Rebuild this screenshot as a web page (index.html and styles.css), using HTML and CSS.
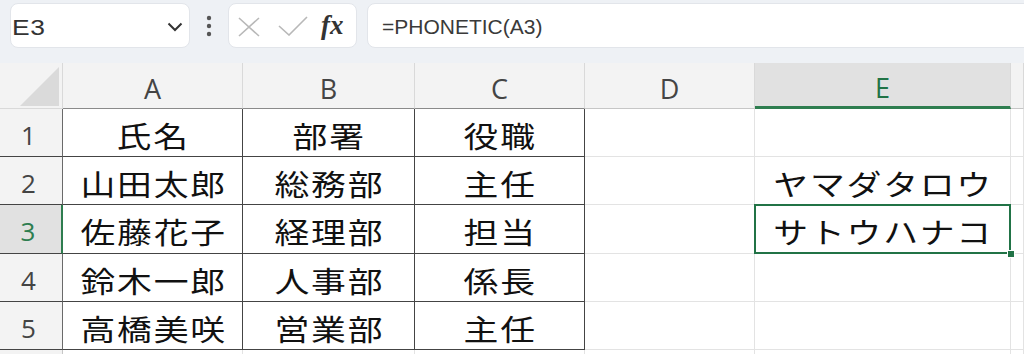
FILE: index.html
```html
<!DOCTYPE html>
<html lang="ja">
<head>
    <meta charset="UTF-8">
    <title>PHONETIC</title>
    <link rel="stylesheet" href="styles.css">
</head>
<body>
    <!-- formula bar -->
    <div class="toolbar">
        <div class="namebox">
            <span class="ref">E3</span>
            <svg class="chevron" width="16" height="10" viewBox="0 0 16 10"><polyline points="1.5,1.5 8,8 14.5,1.5" fill="none" stroke="#333" stroke-width="2"/></svg>
        </div>
        <div class="more">
            <svg width="6" height="22" viewBox="0 0 6 22"><circle cx="3" cy="3" r="2.2" fill="#555"/><circle cx="3" cy="11" r="2.2" fill="#555"/><circle cx="3" cy="19" r="2.2" fill="#555"/></svg>
        </div>
        <div class="fxbox">
            <svg class="cancel" width="22" height="20" viewBox="0 0 22 20"><path d="M1 1 L21 19 M21 1 L1 19" stroke="#b8b8b8" stroke-width="1.6" fill="none"/></svg>
            <svg class="enter" width="30" height="20" viewBox="0 0 30 20"><polyline points="1,10 11,19 29,1" stroke="#b8b8b8" stroke-width="1.6" fill="none"/></svg>
            <span class="fx">fx</span>
        </div>
        <div class="formula">=PHONETIC(A3)</div>
    </div>

    <!-- sheet -->
    <div class="sheet">
        <div class="cell corner"><svg width="63" height="46" viewBox="0 0 63 46"><polygon points="59,4 59,43 20,43" fill="#dadada"/></svg></div>
        <div class="cell ch tbl">A</div>
        <div class="cell ch tbl">B</div>
        <div class="cell ch tbl">C</div>
        <div class="cell ch">D</div>
        <div class="cell ch active">E</div>
        <div class="cell ch"></div>

        <div class="cell rh tbl">1</div>
        <div class="cell jp tbl"><span>氏名</span></div>
        <div class="cell jp tbl"><span>部署</span></div>
        <div class="cell jp tbl"><span>役職</span></div>
        <div class="cell"></div>
        <div class="cell"></div>
        <div class="cell"></div>

        <div class="cell rh tbl">2</div>
        <div class="cell jp tbl"><span>山田太郎</span></div>
        <div class="cell jp tbl"><span>総務部</span></div>
        <div class="cell jp tbl"><span>主任</span></div>
        <div class="cell"></div>
        <div class="cell jp"><span>ヤマダタロウ</span></div>
        <div class="cell"></div>

        <div class="cell rh tbl active">3</div>
        <div class="cell jp tbl"><span>佐藤花子</span></div>
        <div class="cell jp tbl"><span>経理部</span></div>
        <div class="cell jp tbl"><span>担当</span></div>
        <div class="cell"></div>
        <div class="cell jp selected"><span>サトウハナコ</span></div>
        <div class="cell"></div>

        <div class="cell rh tbl">4</div>
        <div class="cell jp tbl"><span>鈴木一郎</span></div>
        <div class="cell jp tbl"><span>人事部</span></div>
        <div class="cell jp tbl"><span>係長</span></div>
        <div class="cell"></div>
        <div class="cell"></div>
        <div class="cell"></div>

        <div class="cell rh tbl">5</div>
        <div class="cell jp tbl"><span>高橋美咲</span></div>
        <div class="cell jp tbl"><span>営業部</span></div>
        <div class="cell jp tbl"><span>主任</span></div>
        <div class="cell"></div>
        <div class="cell"></div>
        <div class="cell"></div>

        <div class="cell rh"></div>
        <div class="cell"></div>
        <div class="cell"></div>
        <div class="cell"></div>
        <div class="cell"></div>
        <div class="cell"></div>
        <div class="cell"></div>
    </div>
</body>
</html>
```

FILE: styles.css
```css
body {
    margin: 0;
    width: 1024px;
    height: 354px;
    overflow: hidden;
    background: #ffffff;
    font-family: 'Liberation Sans', Arial, sans-serif;
}
.toolbar {
    display: flex;
    align-items: flex-start;
    height: 63px;
    box-sizing: border-box;
    padding: 3px 0 0 10px;
    background: #eef1f5;
}
.namebox, .fxbox, .formula {
    height: 45px;
    box-sizing: border-box;
    background: #ffffff;
    border: 1px solid #e2e5ea;
    border-radius: 8px;
    display: flex;
    align-items: center;
}
.namebox {
    width: 180px;
    justify-content: space-between;
    padding: 0 6px 0 1px;
}
.ref {
    font-size: 22px;
    letter-spacing: 0.5px;
    color: #333;
    padding-top: 4px;
    transform: scaleX(1.2);
    transform-origin: left center;
}
.chevron {
    margin-top: 2px;
}
.more {
    width: 38px;
    display: flex;
    justify-content: center;
    padding-top: 12px;
}
.fxbox {
    width: 129px;
    padding-left: 9px;
}
.cancel {
    margin-top: 3px;
}
.enter {
    margin: 1px 0 0 18px;
}
.fx {
    font-family: 'Liberation Serif', 'Times New Roman', serif;
    font-style: italic;
    font-weight: bold;
    font-size: 27px;
    color: #333;
    margin-left: 13px;
}
.formula {
    flex: 1;
    margin: 0 -12px 0 10px;
    padding: 3px 0 0 14px;
    font-size: 21px;
    color: #3a3a3a;
}
.sheet {
    display: grid;
    grid-template-columns: 63px 180px 172px 170px 170px 256px 1fr;
    grid-template-rows: 46px 48px 48px 49px 48px 48px 1fr;
    height: 291px;
}
.cell {
    box-sizing: border-box;
    border-right: 1px solid #e3e3e3;
    border-bottom: 1px solid #e3e3e3;
    display: flex;
    align-items: center;
    justify-content: center;
}
.corner, .ch, .rh {
    background: #f3f3f3;
    border-color: #d9d9d9;
    font-family: 'Open Sans', sans-serif;
    color: #444;
}
.corner {
    display: block;
}
.corner svg {
    display: block;
}
.ch {
    font-size: 27px;
    padding-top: 6px;
    border-bottom-color: #c6c6c6;
}
.ch.tbl {
    border-bottom-color: #8a8a8a;
}
.ch.active {
    background: #e1e1e1;
    color: #217346;
    border-bottom: 3px solid #2e7d4f;
}
.rh {
    font-size: 26px;
    padding: 4px 5px 0 0;
    border-right-color: #c6c6c6;
}
.rh.tbl {
    border-right-color: #6a6a6a;
}
.rh.active {
    background: #e1e1e1;
    color: #2e7d4f;
    border-right: 2px solid #2e7d4f;
}
.tbl {
    border-bottom-color: #444;
}
.jp.tbl {
    border-right-color: #444;
}
.jp {
    font-family: 'Noto Sans CJK JP', sans-serif;
    font-size: 29px;
    color: #111;
    padding-top: 4px;
}
.jp span {
    display: inline-block;
    letter-spacing: 1.5px;
    padding-left: 1.5px;
    transform: scaleX(1.2);
}
.selected {
    position: relative;
}
.selected::after {
    content: "";
    position: absolute;
    left: -1px;
    top: -1px;
    right: -1px;
    bottom: -1px;
    border: 2px solid #217346;
}
.selected::before {
    content: "";
    position: absolute;
    right: -5px;
    bottom: -5px;
    width: 6px;
    height: 6px;
    background: #217346;
    border: 1px solid #ffffff;
    z-index: 1;
}
```
